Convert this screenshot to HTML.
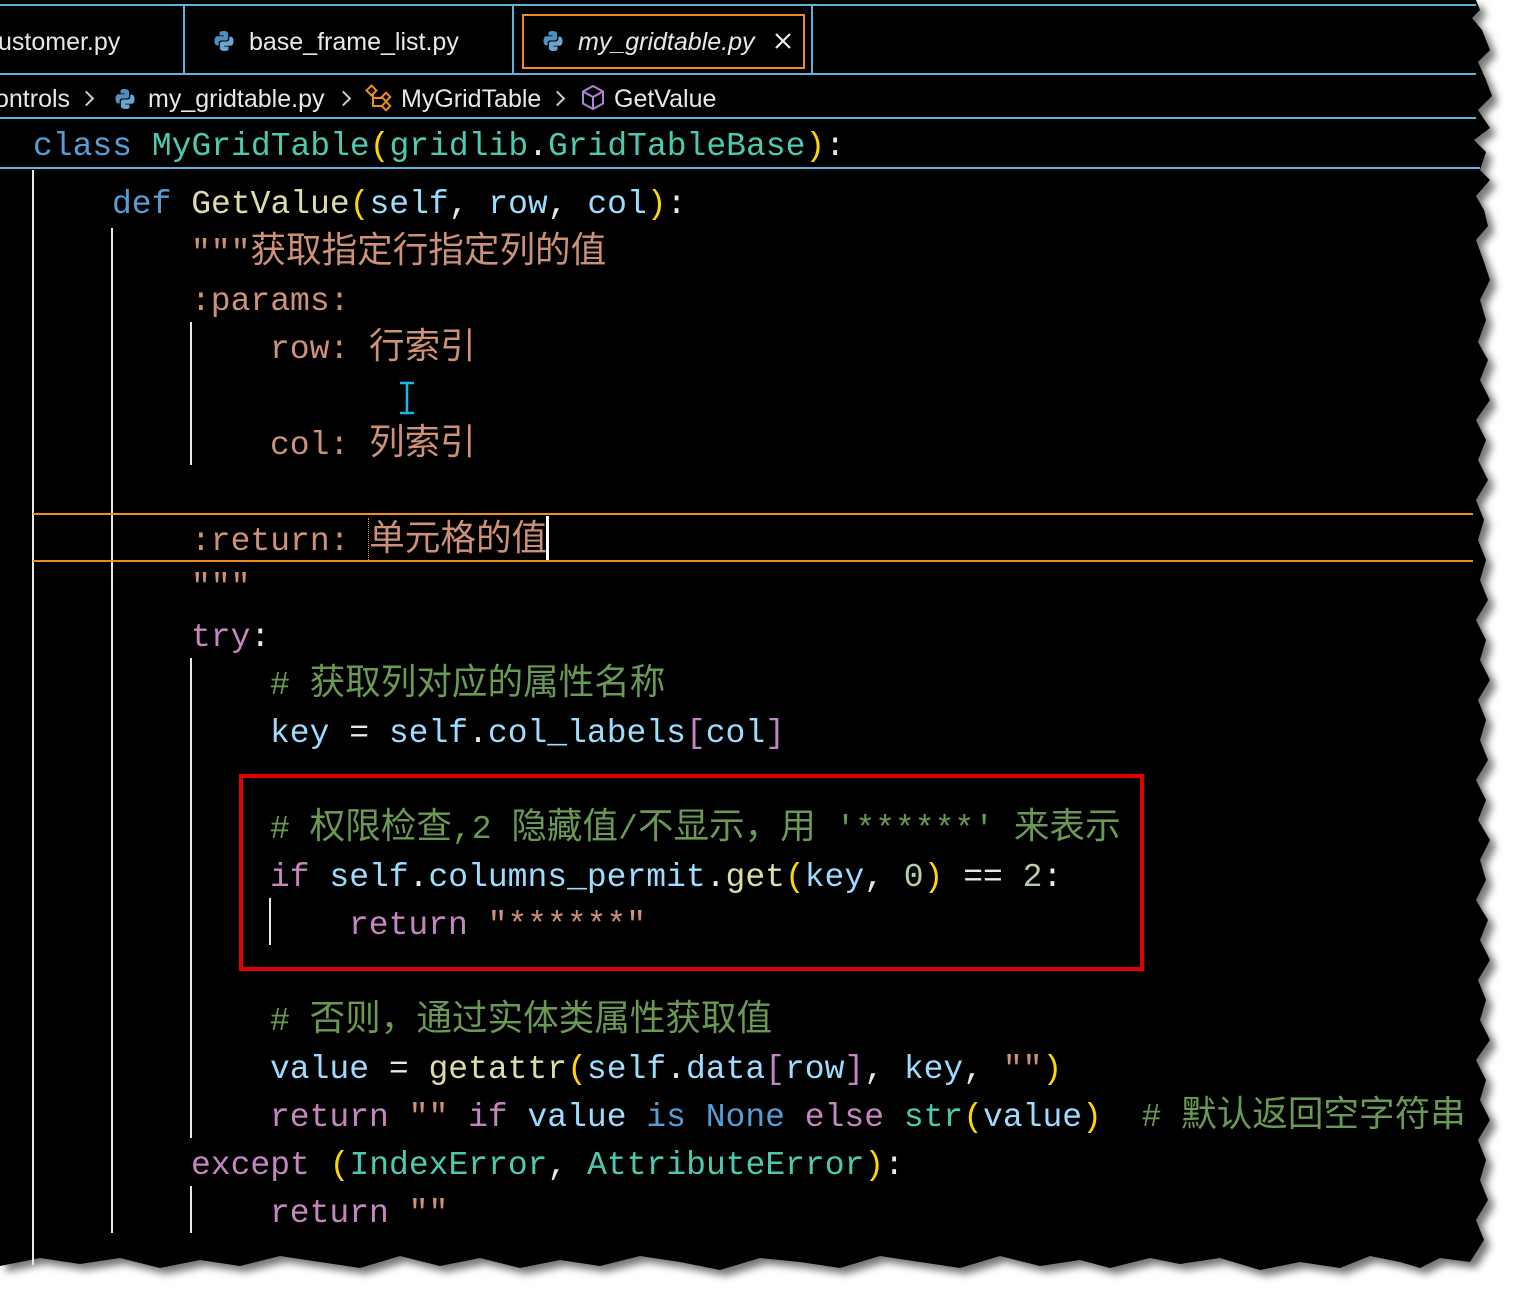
<!DOCTYPE html>
<html><head><meta charset="utf-8"><style>
html,body{margin:0;padding:0;background:#fff;width:1513px;height:1297px;overflow:hidden;position:relative}
svg.bg{position:absolute;left:0;top:0}
.c{position:absolute;font-family:"Liberation Mono","Noto Sans CJK SC",monospace;font-size:33px;line-height:48px;height:48px;white-space:pre;color:#d4d4d4}
.z{font-family:"Noto Sans CJK SC",sans-serif;font-size:35.6px;line-height:1}
.ui{position:absolute;font-family:"Liberation Sans","DejaVu Sans",sans-serif;font-size:25px;color:#e8e8e8;white-space:pre}
.kw{color:#569cd6}.cl{color:#4ec9b0}.p{color:#ffd700}.v{color:#9cdcfe}.f{color:#dcdcaa}.s{color:#ce9178}.cm{color:#6a9955}.k2{color:#c586c0}.n{color:#b5cea8}.w{color:#e8e8e8}
.g{position:absolute;width:2px;background:#e8e8e8}
.h{position:absolute;height:2px}
.chev{position:absolute;width:9px;height:9px;border-right:2px solid #ccc;border-top:2px solid #ccc;transform:rotate(45deg)}
</style></head><body>
<svg class="bg" width="1513" height="1297">
<defs><filter id="sh" x="-5%" y="-5%" width="115%" height="115%"><feGaussianBlur stdDeviation="4"/></filter></defs>
<polygon transform="translate(6,6)" fill="#777" filter="url(#sh)" points="0,0 1476,0 1480,10 1472,18 1482,30 1490,50 1478,62 1486,80 1492,96 1478,110 1490,128 1474,140 1486,152 1480,170 1490,180 1476,196 1484,210 1488,226 1476,240 1484,262 1490,280 1480,300 1486,320 1478,342 1488,360 1480,380 1490,400 1476,420 1486,440 1478,460 1488,480 1476,500 1484,520 1478,540 1486,560 1480,580 1488,600 1476,620 1486,640 1480,660 1490,680 1478,700 1486,720 1480,740 1488,760 1476,780 1486,800 1478,820 1490,840 1480,860 1486,880 1476,900 1488,920 1480,940 1490,960 1478,980 1486,1000 1480,1020 1490,1040 1476,1060 1486,1080 1480,1100 1490,1120 1478,1140 1486,1160 1480,1180 1488,1200 1476,1220 1484,1240 1470,1262 1440,1258 1420,1268 1400,1262 1370,1256 1340,1268 1300,1262 1260,1270 1220,1258 1180,1264 1150,1258 1110,1268 1080,1260 1040,1266 1000,1256 960,1268 920,1262 880,1256 840,1268 800,1262 760,1258 720,1270 680,1262 640,1256 600,1266 560,1260 520,1268 480,1258 440,1266 400,1256 360,1268 320,1262 280,1256 240,1266 200,1260 160,1268 120,1258 80,1264 40,1258 0,1266"/>
<polygon fill="#000" points="0,0 1476,0 1480,10 1472,18 1482,30 1490,50 1478,62 1486,80 1492,96 1478,110 1490,128 1474,140 1486,152 1480,170 1490,180 1476,196 1484,210 1488,226 1476,240 1484,262 1490,280 1480,300 1486,320 1478,342 1488,360 1480,380 1490,400 1476,420 1486,440 1478,460 1488,480 1476,500 1484,520 1478,540 1486,560 1480,580 1488,600 1476,620 1486,640 1480,660 1490,680 1478,700 1486,720 1480,740 1488,760 1476,780 1486,800 1478,820 1490,840 1480,860 1486,880 1476,900 1488,920 1480,940 1490,960 1478,980 1486,1000 1480,1020 1490,1040 1476,1060 1486,1080 1480,1100 1490,1120 1478,1140 1486,1160 1480,1180 1488,1200 1476,1220 1484,1240 1470,1262 1440,1258 1420,1268 1400,1262 1370,1256 1340,1268 1300,1262 1260,1270 1220,1258 1180,1264 1150,1258 1110,1268 1080,1260 1040,1266 1000,1256 960,1268 920,1262 880,1256 840,1268 800,1262 760,1258 720,1270 680,1262 640,1256 600,1266 560,1260 520,1268 480,1258 440,1266 400,1256 360,1268 320,1262 280,1256 240,1266 200,1260 160,1268 120,1258 80,1264 40,1258 0,1266"/>
</svg>

<div class="h" style="left:0;top:4px;width:1476px;background:#5fb3d6"></div>
<div class="h" style="left:0;top:73px;width:1476px;background:#5fb3d6"></div>
<div class="h" style="left:0;top:117px;width:1476px;background:#5fb3d6"></div>
<div class="h" style="left:0;top:167px;width:1480px;background:#5fb3d6"></div>
<div style="position:absolute;left:183px;top:5px;width:2px;height:69px;background:#5fb3d6"></div>
<div style="position:absolute;left:512px;top:5px;width:2px;height:69px;background:#5fb3d6"></div>
<div style="position:absolute;left:811px;top:5px;width:2px;height:69px;background:#5fb3d6"></div>
<div style="position:absolute;left:522px;top:14px;width:279px;height:51px;border:2px solid #f08a24"></div>

<svg style="position:absolute;left:212px;top:28px" width="24" height="26" viewBox="0 0 24 24"><path d="M11.5 2C7 2 7.5 4 7.5 4v2.5h4.2v.8H5.5S2.5 7 2.5 11.8s2.6 4.6 2.6 4.6h1.6v-2.3s-.1-2.6 2.6-2.6h4.3s2.5 0 2.5-2.4V5.1S16.5 2 11.5 2z" fill="#4f8fc0"/><path d="M12.5 22c4.5 0 4-2 4-2v-2.5h-4.2v-.8h6.2s3 .3 3-4.5-2.6-4.6-2.6-4.6h-1.6v2.3s.1 2.6-2.6 2.6h-4.3s-2.5 0-2.5 2.4v4s-.4 3.1 4.6 3.1z" fill="#6aa6d0"/></svg>
<svg style="position:absolute;left:541px;top:28px" width="24" height="26" viewBox="0 0 24 24"><path d="M11.5 2C7 2 7.5 4 7.5 4v2.5h4.2v.8H5.5S2.5 7 2.5 11.8s2.6 4.6 2.6 4.6h1.6v-2.3s-.1-2.6 2.6-2.6h4.3s2.5 0 2.5-2.4V5.1S16.5 2 11.5 2z" fill="#4f8fc0"/><path d="M12.5 22c4.5 0 4-2 4-2v-2.5h-4.2v-.8h6.2s3 .3 3-4.5-2.6-4.6-2.6-4.6h-1.6v2.3s.1 2.6-2.6 2.6h-4.3s-2.5 0-2.5 2.4v4s-.4 3.1 4.6 3.1z" fill="#6aa6d0"/></svg>
<svg style="position:absolute;left:113px;top:86px" width="24" height="26" viewBox="0 0 24 24"><path d="M11.5 2C7 2 7.5 4 7.5 4v2.5h4.2v.8H5.5S2.5 7 2.5 11.8s2.6 4.6 2.6 4.6h1.6v-2.3s-.1-2.6 2.6-2.6h4.3s2.5 0 2.5-2.4V5.1S16.5 2 11.5 2z" fill="#4f8fc0"/><path d="M12.5 22c4.5 0 4-2 4-2v-2.5h-4.2v-.8h6.2s3 .3 3-4.5-2.6-4.6-2.6-4.6h-1.6v2.3s.1 2.6-2.6 2.6h-4.3s-2.5 0-2.5 2.4v4s-.4 3.1 4.6 3.1z" fill="#6aa6d0"/></svg>

<div class="ui" style="left:-2px;top:28px">ustomer.py</div>
<div class="ui" style="left:249px;top:28px">base_frame_list.py</div>
<div class="ui" style="left:578px;top:28px;font-style:italic">my_gridtable.py</div>
<svg style="position:absolute;left:773px;top:31px" width="20" height="20" viewBox="0 0 20 20" stroke="#eee" stroke-width="2.2"><path d="M3 3 17 17M17 3 3 17"/></svg>

<div class="ui" style="left:-5px;top:85px">ontrols</div>
<div class="chev" style="left:81px;top:93px"></div>
<div class="ui" style="left:148px;top:85px">my_gridtable.py</div>
<div class="chev" style="left:338px;top:93px"></div>
<svg style="position:absolute;left:365px;top:84px" width="30" height="28" viewBox="0 0 30 28" fill="none" stroke="#f08a24" stroke-width="2"><rect x="3" y="3" width="7" height="7" transform="rotate(45 6.5 6.5)"/><rect x="18" y="10" width="6" height="6" transform="rotate(45 21 13)"/><rect x="18" y="19" width="6" height="6" transform="rotate(45 21 22)"/><path d="M8 10v12h9M8 14h9"/></svg>
<div class="ui" style="left:401px;top:85px">MyGridTable</div>
<div class="chev" style="left:552px;top:93px"></div>
<svg style="position:absolute;left:580px;top:84px" width="26" height="28" viewBox="0 0 26 28" fill="none" stroke="#b180d7" stroke-width="2"><path d="M13 2 23 7.5v12L13 25 3 19.5v-12z M3 7.5 13 13l10-5.5 M13 13v12"/></svg>
<div class="ui" style="left:614px;top:85px">GetValue</div>

<div class="g" style="left:32px;top:170px;height:1095px"></div>
<div class="g" style="left:111px;top:228px;height:1005px"></div>
<div class="g" style="left:190px;top:322px;height:143px"></div>
<div class="g" style="left:190px;top:658px;height:480px"></div>
<div class="g" style="left:190px;top:1186px;height:47px"></div>
<div class="g" style="left:269px;top:898px;height:47px"></div>

<div class="h" style="left:33px;top:513px;width:1440px;background:#f08a24"></div>
<div class="h" style="left:33px;top:560px;width:1440px;background:#f08a24"></div>
<div style="position:absolute;left:546px;top:516px;width:3px;height:44px;background:#fff"></div>
<div style="position:absolute;left:368px;top:518px;width:0;height:42px;border-left:1px dotted #f08a24"></div>
<div style="position:absolute;left:239px;top:774px;width:897px;height:189px;border:4px solid #e00000"></div>
<svg style="position:absolute;left:397px;top:381px" width="20" height="34" viewBox="0 0 20 34" stroke="#1fb5e8" stroke-width="2.5" fill="none"><path d="M3 2h14M10 2v30M3 32h14"/></svg>

<div class="c" style="left:33px;top:123px"><span class="kw">class</span> <span class="cl">MyGridTable</span><span class="p">(</span><span class="cl">gridlib</span><span class="w">.</span><span class="cl">GridTableBase</span><span class="p">)</span><span class="w">:</span></div>
<div class="c" style="left:112px;top:181px"><span class="kw">def</span> <span class="f">GetValue</span><span class="p">(</span><span class="v">self</span><span class="w">,</span> <span class="v">row</span><span class="w">,</span> <span class="v">col</span><span class="p">)</span><span class="w">:</span></div>
<div class="c s" style="left:191px;top:230px">"""<span class="z">获取指定行指定列的值</span></div>
<div class="c s" style="left:191px;top:278px">:params:</div>
<div class="c s" style="left:270px;top:326px">row: <span class="z">行索引</span></div>
<div class="c s" style="left:270px;top:422px">col: <span class="z">列索引</span></div>
<div class="c s" style="left:191px;top:518px">:return: <span class="z">单元格的值</span></div>
<div class="c s" style="left:191px;top:564px">"""</div>
<div class="c" style="left:191px;top:614px"><span class="k2">try</span><span class="w">:</span></div>
<div class="c cm" style="left:270px;top:662px"># <span class="z">获取列对应的属性名称</span></div>
<div class="c" style="left:270px;top:710px"><span class="v">key</span> <span class="w">=</span> <span class="v">self</span><span class="w">.</span><span class="v">col_labels</span><span class="k2">[</span><span class="v">col</span><span class="k2">]</span></div>
<div class="c cm" style="left:270px;top:806px"># <span class="z">权限检查</span>,2 <span class="z">隐藏值</span>/<span class="z">不显示，用</span> '******' <span class="z">来表示</span></div>
<div class="c" style="left:270px;top:854px"><span class="k2">if</span> <span class="v">self</span><span class="w">.</span><span class="v">columns_permit</span><span class="w">.</span><span class="f">get</span><span class="p">(</span><span class="v">key</span><span class="w">,</span> <span class="n">0</span><span class="p">)</span> <span class="w">==</span> <span class="n">2</span><span class="w">:</span></div>
<div class="c" style="left:349px;top:902px"><span class="k2">return</span> <span class="s">"******"</span></div>
<div class="c cm" style="left:270px;top:998px"># <span class="z">否则，通过实体类属性获取值</span></div>
<div class="c" style="left:270px;top:1046px"><span class="v">value</span> <span class="w">=</span> <span class="f">getattr</span><span class="p">(</span><span class="v">self</span><span class="w">.</span><span class="v">data</span><span class="k2">[</span><span class="v">row</span><span class="k2">]</span><span class="w">,</span> <span class="v">key</span><span class="w">,</span> <span class="s">""</span><span class="p">)</span></div>
<div class="c" style="left:270px;top:1094px"><span class="k2">return</span> <span class="s">""</span> <span class="k2">if</span> <span class="v">value</span> <span class="kw">is</span> <span class="kw">None</span> <span class="k2">else</span> <span class="cl">str</span><span class="p">(</span><span class="v">value</span><span class="p">)</span>  <span class="cm"># <span class="z">默认返回空字符串</span></span></div>
<div class="c" style="left:191px;top:1142px"><span class="k2">except</span> <span class="p">(</span><span class="cl">IndexError</span><span class="w">,</span> <span class="cl">AttributeError</span><span class="p">)</span><span class="w">:</span></div>
<div class="c" style="left:270px;top:1190px"><span class="k2">return</span> <span class="s">""</span></div>
</body></html>
